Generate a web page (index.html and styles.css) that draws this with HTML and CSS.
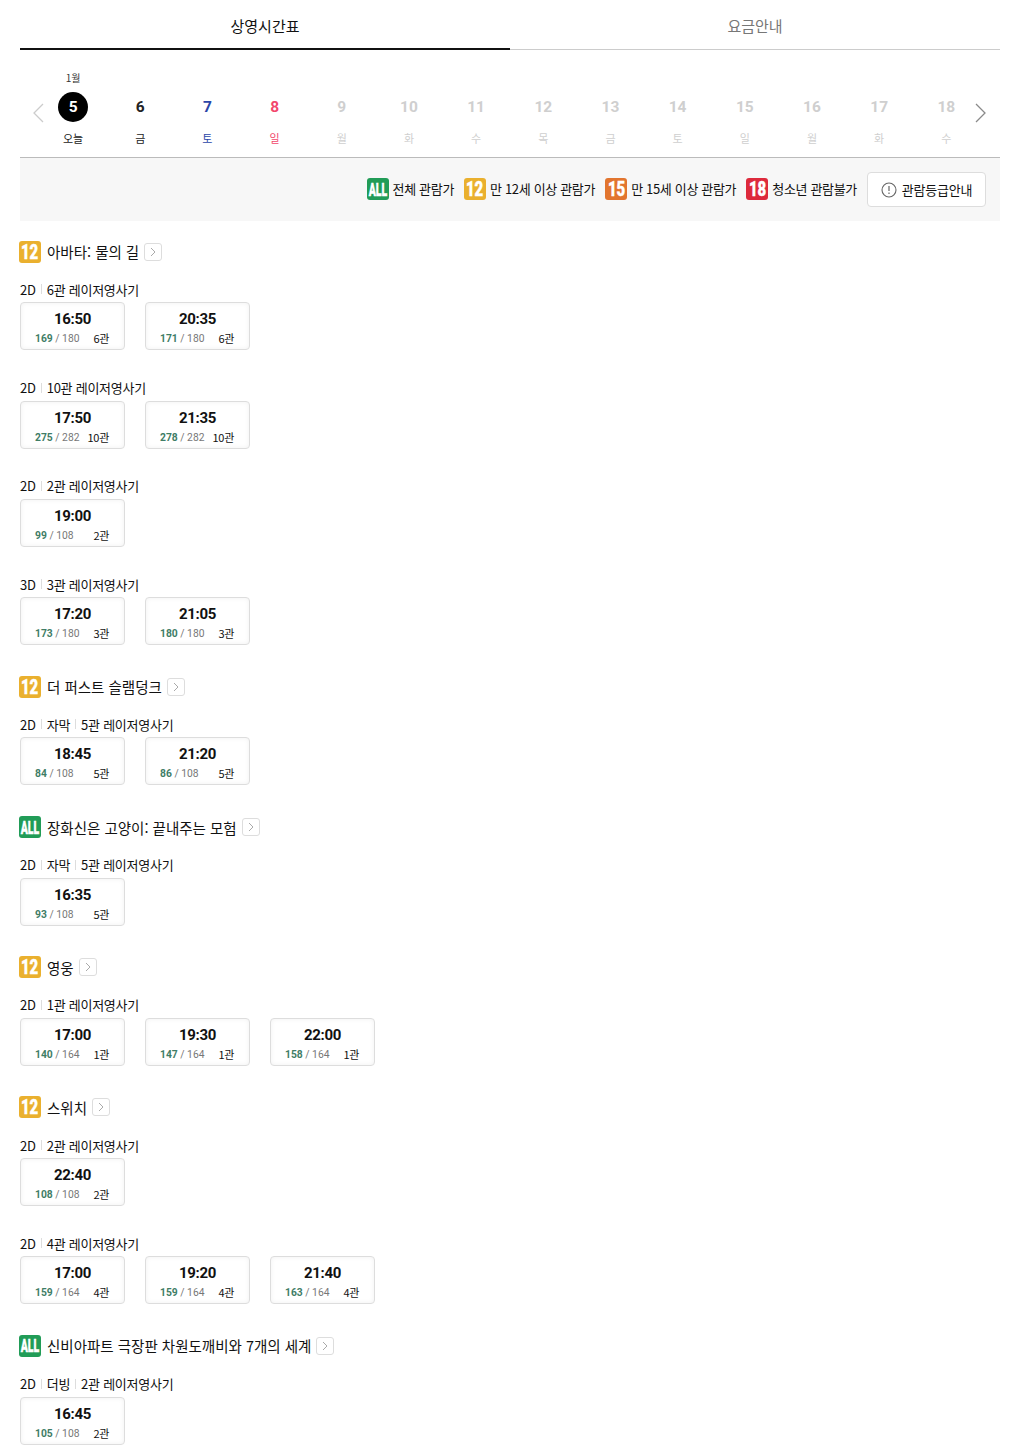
FILE: index.html
```html
<!DOCTYPE html>
<html lang="ko">
<head>
    <meta charset="UTF-8">
    <title>상영시간표</title>
    <link rel="stylesheet" href="styles.css">
</head>
<body>
    <div class="tabs">
        <div class="tab active">상영시간표</div>
        <div class="tab">요금안내</div>
    </div>

    <div class="dates">
        <svg class="arrow arrow-prev" width="12" height="20" viewBox="0 0 12 20"><path d="M11 1 2 10l9 9" fill="none" stroke="#ccc" stroke-width="1.3"/></svg>
        <svg class="arrow arrow-next" width="12" height="20" viewBox="0 0 12 20"><path d="M1 1l9 9-9 9" fill="none" stroke="#8a8a8a" stroke-width="1.3"/></svg>
        <div class="month">1월</div>
        <div class="date-row">
            <div class="date today"><span class="num">5</span><span class="day">오늘</span></div>
            <div class="date"><span class="num">6</span><span class="day">금</span></div>
            <div class="date sat"><span class="num">7</span><span class="day">토</span></div>
            <div class="date sun"><span class="num">8</span><span class="day">일</span></div>
            <div class="date off"><span class="num">9</span><span class="day">월</span></div>
            <div class="date off"><span class="num">10</span><span class="day">화</span></div>
            <div class="date off"><span class="num">11</span><span class="day">수</span></div>
            <div class="date off"><span class="num">12</span><span class="day">목</span></div>
            <div class="date off"><span class="num">13</span><span class="day">금</span></div>
            <div class="date off"><span class="num">14</span><span class="day">토</span></div>
            <div class="date off"><span class="num">15</span><span class="day">일</span></div>
            <div class="date off"><span class="num">16</span><span class="day">월</span></div>
            <div class="date off"><span class="num">17</span><span class="day">화</span></div>
            <div class="date off"><span class="num">18</span><span class="day">수</span></div>
        </div>
    </div>

    <div class="legend">
        <span class="legend-item"><span class="badge all"><span>ALL</span></span>전체 관람가</span>
        <span class="legend-item"><span class="badge age12"><span>12</span></span>만 12세 이상 관람가</span>
        <span class="legend-item"><span class="badge age15"><span>15</span></span>만 15세 이상 관람가</span>
        <span class="legend-item"><span class="badge age18"><span>18</span></span>청소년 관람불가</span>
        <button class="legend-btn">
            <svg width="16" height="16" viewBox="0 0 16 16"><circle cx="8" cy="8" r="7" fill="none" stroke="#666" stroke-width="1.1"/><path d="M8 4v5M8 10.6v1.4" stroke="#666" stroke-width="1.2"/></svg>
            관람등급안내
        </button>
    </div>

    <div class="movies">
        <div class="movie">
            <div class="movie-title"><span class="badge age12"><span>12</span></span>아바타: 물의 길<span class="more"><svg width="6" height="10" viewBox="0 0 6 10"><path d="M1 1l4 4-4 4" fill="none" stroke="#aaa"/></svg></span></div>
            <div class="format">
                <div class="format-name">2D<i></i>6관 레이저영사기</div>
                <div class="times">
                    <div class="time"><strong>16:50</strong><p><span><b>169</b> / 180</span><em>6관</em></p></div>
                    <div class="time"><strong>20:35</strong><p><span><b>171</b> / 180</span><em>6관</em></p></div>
                </div>
            </div>
            <div class="format">
                <div class="format-name">2D<i></i>10관 레이저영사기</div>
                <div class="times">
                    <div class="time"><strong>17:50</strong><p><span><b>275</b> / 282</span><em>10관</em></p></div>
                    <div class="time"><strong>21:35</strong><p><span><b>278</b> / 282</span><em>10관</em></p></div>
                </div>
            </div>
            <div class="format">
                <div class="format-name">2D<i></i>2관 레이저영사기</div>
                <div class="times">
                    <div class="time"><strong>19:00</strong><p><span><b>99</b> / 108</span><em>2관</em></p></div>
                </div>
            </div>
            <div class="format">
                <div class="format-name">3D<i></i>3관 레이저영사기</div>
                <div class="times">
                    <div class="time"><strong>17:20</strong><p><span><b>173</b> / 180</span><em>3관</em></p></div>
                    <div class="time"><strong>21:05</strong><p><span><b>180</b> / 180</span><em>3관</em></p></div>
                </div>
            </div>
        </div>

        <div class="movie">
            <div class="movie-title"><span class="badge age12"><span>12</span></span>더 퍼스트 슬램덩크<span class="more"><svg width="6" height="10" viewBox="0 0 6 10"><path d="M1 1l4 4-4 4" fill="none" stroke="#aaa"/></svg></span></div>
            <div class="format">
                <div class="format-name">2D<i></i>자막<i></i>5관 레이저영사기</div>
                <div class="times">
                    <div class="time"><strong>18:45</strong><p><span><b>84</b> / 108</span><em>5관</em></p></div>
                    <div class="time"><strong>21:20</strong><p><span><b>86</b> / 108</span><em>5관</em></p></div>
                </div>
            </div>
        </div>

        <div class="movie">
            <div class="movie-title"><span class="badge all"><span>ALL</span></span>장화신은 고양이: 끝내주는 모험<span class="more"><svg width="6" height="10" viewBox="0 0 6 10"><path d="M1 1l4 4-4 4" fill="none" stroke="#aaa"/></svg></span></div>
            <div class="format">
                <div class="format-name">2D<i></i>자막<i></i>5관 레이저영사기</div>
                <div class="times">
                    <div class="time"><strong>16:35</strong><p><span><b>93</b> / 108</span><em>5관</em></p></div>
                </div>
            </div>
        </div>

        <div class="movie">
            <div class="movie-title"><span class="badge age12"><span>12</span></span>영웅<span class="more"><svg width="6" height="10" viewBox="0 0 6 10"><path d="M1 1l4 4-4 4" fill="none" stroke="#aaa"/></svg></span></div>
            <div class="format">
                <div class="format-name">2D<i></i>1관 레이저영사기</div>
                <div class="times">
                    <div class="time"><strong>17:00</strong><p><span><b>140</b> / 164</span><em>1관</em></p></div>
                    <div class="time"><strong>19:30</strong><p><span><b>147</b> / 164</span><em>1관</em></p></div>
                    <div class="time"><strong>22:00</strong><p><span><b>158</b> / 164</span><em>1관</em></p></div>
                </div>
            </div>
        </div>

        <div class="movie">
            <div class="movie-title"><span class="badge age12"><span>12</span></span>스위치<span class="more"><svg width="6" height="10" viewBox="0 0 6 10"><path d="M1 1l4 4-4 4" fill="none" stroke="#aaa"/></svg></span></div>
            <div class="format">
                <div class="format-name">2D<i></i>2관 레이저영사기</div>
                <div class="times">
                    <div class="time"><strong>22:40</strong><p><span><b>108</b> / 108</span><em>2관</em></p></div>
                </div>
            </div>
            <div class="format">
                <div class="format-name">2D<i></i>4관 레이저영사기</div>
                <div class="times">
                    <div class="time"><strong>17:00</strong><p><span><b>159</b> / 164</span><em>4관</em></p></div>
                    <div class="time"><strong>19:20</strong><p><span><b>159</b> / 164</span><em>4관</em></p></div>
                    <div class="time"><strong>21:40</strong><p><span><b>163</b> / 164</span><em>4관</em></p></div>
                </div>
            </div>
        </div>

        <div class="movie">
            <div class="movie-title"><span class="badge all"><span>ALL</span></span>신비아파트 극장판 차원도깨비와 7개의 세계<span class="more"><svg width="6" height="10" viewBox="0 0 6 10"><path d="M1 1l4 4-4 4" fill="none" stroke="#aaa"/></svg></span></div>
            <div class="format">
                <div class="format-name">2D<i></i>더빙<i></i>2관 레이저영사기</div>
                <div class="times">
                    <div class="time"><strong>16:45</strong><p><span><b>105</b> / 108</span><em>2관</em></p></div>
                </div>
            </div>
        </div>
    </div>
</body>
</html>
```

FILE: styles.css
```css
* {
    box-sizing: border-box;
}
body {
    margin: 0;
    padding: 0 20px;
    height: 1456px;
    overflow: hidden;
    background-color: #fff;
    color: #111;
    font-family: "Noto Sans CJK KR", "Noto Sans", sans-serif;
    font-size: 13px;
}

/* tabs */
.tabs {
    display: flex;
    height: 50px;
}
.tab {
    flex: 1;
    text-align: center;
    font-size: 15px;
    line-height: 52px;
    color: #777;
    border-bottom: 1px solid #ccc;
}
.tab.active {
    color: #111;
    border-bottom: 2px solid #111;
}

/* date strip */
.dates {
    position: relative;
    padding: 20px 20px 0;
    height: 108px;
    border-bottom: 1px solid #bbb;
}
.arrow {
    position: absolute;
    top: 53px;
}
.arrow-prev {
    left: 12px;
}
.arrow-next {
    right: 13px;
}
.month {
    width: 66px;
    height: 16px;
    margin-bottom: 6px;
    text-align: center;
    font-size: 10px;
    line-height: 16px;
    color: #333;
}
.date-row {
    display: flex;
    margin-left: -0.5px;
}
.date {
    flex: 1;
    display: flex;
    flex-direction: column;
    align-items: center;
    color: #222;
}
.num {
    width: 30px;
    height: 30px;
    border-radius: 50%;
    text-align: center;
    font-family: Roboto, sans-serif;
    font-size: 15.5px;
    font-weight: 700;
    line-height: 31px;
}
.day {
    margin-top: 8px;
    font-size: 11px;
    line-height: 16px;
}
.today .num {
    background-color: #000;
    color: #fff;
}
.sat {
    color: #2b46a8;
}
.sun {
    color: #f2476c;
}
.off {
    color: #cfcfcf;
}

/* legend */
.legend {
    display: flex;
    justify-content: flex-end;
    align-items: center;
    gap: 10px;
    height: 63px;
    padding-right: 14px;
    padding-bottom: 1px;
    background-color: #f7f7f7;
}
.legend-item {
    display: flex;
    align-items: center;
    gap: 4px;
    padding-bottom: 2px;
    font-size: 13px;
    letter-spacing: -0.33px;
}
.legend-item .badge {
    margin-top: 2px;
}
.legend-btn {
    display: flex;
    align-items: center;
    justify-content: center;
    gap: 5px;
    width: 119px;
    height: 35px;
    margin-top: 1px;
    background: #fff;
    border: 1px solid #ddd;
    border-radius: 4px;
    color: #111;
    font-family: inherit;
    font-size: 13px;
    letter-spacing: -0.2px;
}

/* rating badges */
.badge {
    flex: none;
    display: flex;
    align-items: center;
    justify-content: center;
    width: 22px;
    height: 22px;
    border-radius: 3px;
    color: #fff;
    font-family: Roboto, sans-serif;
    font-size: 20px;
    font-weight: 900;
    letter-spacing: 0;
}
.badge span {
    display: block;
    transform: scaleX(0.75);
    -webkit-text-stroke: 0.4px #fff;
}
.badge.all {
    background-color: #219c57;
    font-size: 18px;
}
.badge.all span {
    transform: scaleX(0.58);
}
.age12 {
    background-color: #eab02e;
}
.age15 {
    background-color: #e2752f;
}
.age18 {
    background-color: #dd2a3c;
}

/* movie list */
.movies {
    padding-top: 17.5px;
}
.movie {
    padding-top: 2.3px;
}
.movie-title {
    display: flex;
    align-items: center;
    height: 22px;
    margin-bottom: 17.6px;
    margin-left: -1px;
    font-size: 14.5px;
}
.movie-title .badge {
    margin-right: 6px;
}
.more {
    display: flex;
    align-items: center;
    justify-content: center;
    width: 18px;
    height: 18px;
    margin-left: 5px;
    border: 1px solid #ddd;
    border-radius: 3px;
}
.format {
    margin-bottom: 28.3px;
}
.format-name {
    display: flex;
    align-items: center;
    height: 18px;
    margin-bottom: 4px;
    font-size: 13px;
    letter-spacing: -0.25px;
}
.format-name i {
    width: 1px;
    height: 10px;
    margin: 0 5px;
    background-color: #ddd;
}
.times {
    display: flex;
    gap: 20px;
}
.time {
    width: 105px;
    height: 48px;
    padding: 6px 15px 0;
    border: 1px solid #ddd;
    border-radius: 4px;
    background-color: #fff;
    box-shadow: inset 0 0 5px #f1f1f1;
    text-align: center;
}
.time strong {
    display: block;
    font-family: Roboto, sans-serif;
    font-size: 15px;
    font-weight: 700;
    letter-spacing: -0.3px;
    line-height: 20px;
}
.time p {
    display: flex;
    justify-content: space-between;
    align-items: center;
    height: 14px;
    margin: 3px 0 0 -1px;
    font-size: 11px;
    line-height: 14px;
}
.time span {
    font-family: Roboto, sans-serif;
    font-size: 10.3px;
    color: #777;
}
.time b {
    color: #3f7d66;
    font-weight: 700;
}
.time em {
    margin-top: -2px;
    font-style: normal;
    letter-spacing: -0.3px;
}
```
